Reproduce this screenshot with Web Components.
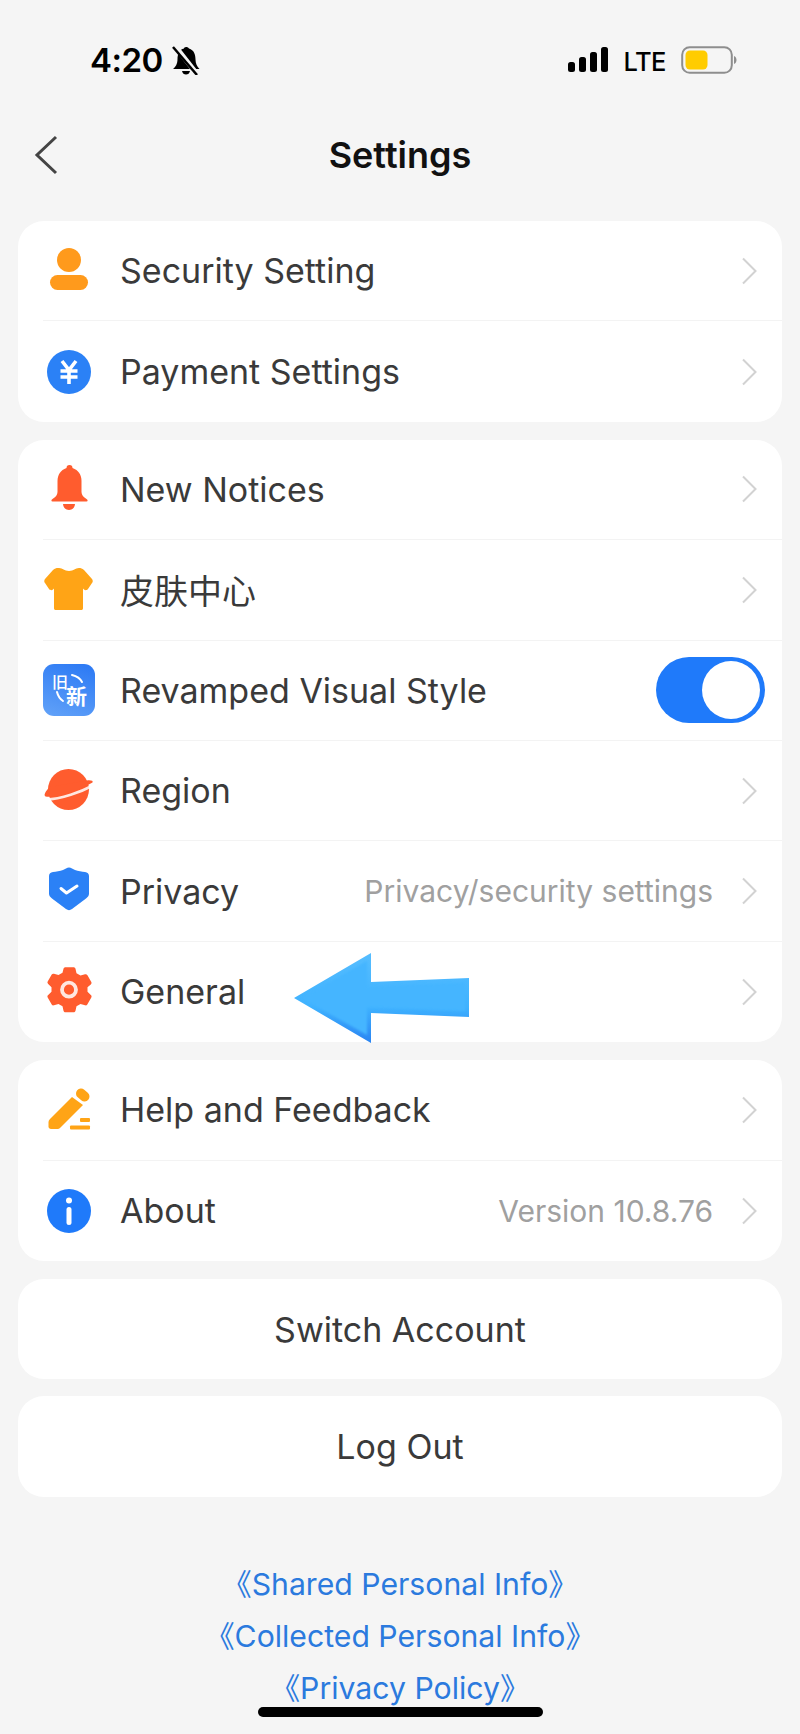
<!DOCTYPE html>
<html>
<head>
<meta charset="utf-8">
<title>Settings</title>
<style>
html, body {
    margin: 0;
    padding: 0;
    background: #f5f5f5;
}
body {
    width: 800px;
    height: 1734px;
    overflow: hidden;
    position: relative;
    font-family: Inter, "Noto Sans CJK SC", sans-serif;
}
</style>
</head>
<body>
<status-bar></status-bar>
<nav-bar>Settings</nav-bar>
<settings-card>
    <setting-row label="Security Setting"><svg slot="icon" width="52" height="52" viewBox="0 0 52 52"><circle cx="26" cy="15" r="12" fill="#ff9a1c"/><rect x="7" y="30" width="38" height="15" rx="7.5" fill="#ff9a1c"/></svg></setting-row>
    <setting-row label="Payment Settings"><svg slot="icon" width="52" height="52" viewBox="0 0 52 52"><circle cx="26" cy="26" r="22" fill="#2b81f6"/><path d="M19 15l7 9 7-9M17.5 25h17M17.5 31h17M26 24v14" fill="none" stroke="#fff" stroke-width="3.6"/></svg></setting-row>
</settings-card>
<settings-card>
    <setting-row label="New Notices"><svg slot="icon" width="52" height="52" viewBox="0 0 52 52"><path d="M23.5 5a3 3 0 0 1 6 0c6 2 9 7 9 13v11c0 3 2 5 5 7 1.5 1 1.5 2.5 0 2.5H9.5c-1.500 0-1.500-1.500 0-2.500 3-2 5-4 5-7V18c0-6 3-11 9-13z" fill="#ff5c2e"/><path d="M20 41h12c-.5 4-3 6-6 6s-5.500-2-6-6z" fill="#ff5c2e"/></svg></setting-row>
    <setting-row label="皮肤中心"><svg slot="icon" width="52" height="52" viewBox="0 0 52 52"><path d="M16 4c4 0 5 3 10 3s6-3 10-3c2 0 3 .5 5 2l8 9c1 1.500 1 3 0 4l-4 6c-1 1.500-3 1.500-4 .5l-1-1V44c0 1.500-.5 2-2 2H13c-1.500 0-2-.5-2-2V24.500l-1 1c-1 1-3 1-4-.5l-4-6c-1-1-1-2.500 0-4l8-9c2-1.500 3-2 5-2z" fill="#ffa416"/></svg></setting-row>
    <setting-row label="Revamped Visual Style" toggle><new-badge slot="icon"></new-badge></setting-row>
    <setting-row label="Region"><svg slot="icon" width="52" height="52" viewBox="0 0 52 52"><circle cx="25.500" cy="24.500" r="20.500" fill="#ff5c2e"/><path d="M6.500 22C3 26 0 30 2.500 31.500 15 33 37 25 49.500 17.500 50.500 16 48 15 44 15.500z" fill="#ff5c2e"/><path d="M3 34.500C18 34 38 27 51 20" fill="none" stroke="#fff" stroke-width="2.600" opacity=".85"/></svg></setting-row>
    <setting-row label="Privacy" value="Privacy/security settings"><svg slot="icon" width="52" height="52" viewBox="0 0 52 52"><path d="M26 2.500c2 0 4 1.500 6 2.500 3 1.200 7 1.500 10 2 2.500.5 4 1.500 4 4v17.500c0 2-1 3.500-3 5L29 44c-2 1.500-4 1.500-6 0L9 33.500c-2-1.500-3-3-3-5V11c0-2.500 1.500-3.500 4-4 3-.5 7-.8 10-2 2-1 4-2.500 6-2.500z" fill="#2b81f6"/><path d="M18 23.500l5.500 4.500L34 21" fill="none" stroke="#fff" stroke-width="3" stroke-linecap="round" stroke-linejoin="round"/></svg></setting-row>
    <setting-row label="General"><svg slot="icon" width="52" height="52" viewBox="0 0 52 52"><g transform="translate(0.500 -2.700)"><path d="M22 4h8c1 0 1.500.5 2 1.500l1 4.500 4 2.300 4.500-1.300c1-.3 1.800 0 2.300.8l4 7c.5 1 .3 1.700-.5 2.400L44 24v4.500l3.300 3.300c.8.7 1 1.400.5 2.400l-4 7c-.5.8-1.300 1.100-2.300.8L37 40.700 33 43l-1 4.500c-.5 1-1 1.500-2 1.500h-8c-1 0-1.500-.5-2-1.500L19 43l-4-2.300-4.500 1.300c-1 .3-1.800 0-2.300-.8l-4-7c-.5-1-.3-1.700.5-2.400L8 28.500V24l-3.300-3.300c-.8-.7-1-1.400-.5-2.400l4-7c.5-.8 1.300-1.100 2.300-.8L15 11.800 19 9.500l1-4C20.500 4.500 21 4 22 4z" fill="#ff5c2e"/><circle cx="25.500" cy="26.400" r="7" fill="none" stroke="#fff" stroke-width="3.800" opacity=".85"/></g></svg></setting-row>
</settings-card>
<settings-card>
    <setting-row label="Help and Feedback"><svg slot="icon" width="52" height="52" viewBox="0 0 52 52"><path d="M29 13l11 8-22.500 22.500c-1 1-2 1.500-3 1.500H8c-1.500 0-2.500-1-2.500-2.500V38c0-1 .5-2 1.500-3z" fill="#ffa416"/><path d="M38 9.500l3.500 3" fill="none" stroke="#ffa416" stroke-width="10" stroke-linecap="round"/><rect x="37" y="34" width="10" height="4" rx="1" fill="#ffa416"/><rect x="27" y="41.500" width="20" height="4" rx="1" fill="#ffa416"/></svg></setting-row>
    <setting-row label="About" value="Version 10.8.76"><svg slot="icon" width="52" height="52" viewBox="0 0 52 52"><circle cx="26" cy="26" r="22" fill="#1f7afa"/><circle cx="26" cy="15.500" r="3" fill="#fff"/><rect x="23.500" y="22" width="5" height="18" rx="2.500" fill="#fff"/></svg></setting-row>
</settings-card>
<action-card>Switch Account</action-card>
<action-card>Log Out</action-card>
<policy-links>
    <a>《Shared Personal Info》</a>
    <a>《Collected Personal Info》</a>
    <a>《Privacy Policy》</a>
</policy-links>
<pointer-arrow></pointer-arrow>
<home-indicator></home-indicator>
<script>
class StatusBar extends HTMLElement {
    constructor() {
        super();
        this.sr = this.attachShadow({ mode: "open" });
    }
    connectedCallback() {
        this.sr.innerHTML = `<style>
:host {
    display: flex;
    align-items: center;
    height: 119px;
    padding: 0 63px 0 90px;
    box-sizing: border-box;
    color: #000;
    font-family: Inter, sans-serif;
}
.time {
    font-size: 33px;
    font-weight: 600;
    letter-spacing: -0.5px;
    margin-right: 8px;
}
.spacer { flex: 1; }
.lte {
    font-size: 25.500px;
    font-weight: 500;
    margin: 3px 15px 0;
    letter-spacing: -0.5px;
}
svg { display: block; }
</style>
<span class="time">4:20</span>
<svg width="30" height="30" viewBox="0 0 30 30"><path d="M13 3a3 3 0 0 1 5 .5c5 1.500 6.500 6 6.500 11 0 4 1.500 7 4 9.500H2c2.500-2 4.500-5 4.500-10 0-5 2-9.500 6.500-10.500z" fill="#000"/><path d="M11 26h8c-.5 2.500-2 3.500-4 3.500s-3.500-1-4-3.500z" fill="#000"/><path d="M4 1l22 28" stroke="#f5f5f5" stroke-width="5"/><path d="M2 2l24 28" stroke="#000" stroke-width="2.500"/></svg>
<span class="spacer"></span>
<svg width="40" height="25" viewBox="0 0 40 25"><rect x="0" y="15" width="7" height="10" rx="2.500"/><rect x="11" y="10" width="7" height="15" rx="2.500"/><rect x="22" y="5" width="7" height="20" rx="2.500"/><rect x="33" y="0" width="7" height="25" rx="2.500"/></svg>
<span class="lte">LTE</span>
<svg width="56" height="28" viewBox="0 0 56 28"><rect x="1.200" y="1.200" width="49.600" height="25.600" rx="7.500" fill="none" stroke="#8e8e8e" stroke-width="2"/><rect x="4.500" y="4.500" width="22" height="19" rx="4.500" fill="#ffcc00"/><path d="M53 10c2 1 2.500 2.500 2.500 4s-.5 3-2.500 4z" fill="#8e8e8e"/></svg>`;
    }
}
customElements.define("status-bar", StatusBar);

class NavBar extends HTMLElement {
    constructor() {
        super();
        this.sr = this.attachShadow({ mode: "open" });
    }
    connectedCallback() {
        this.sr.innerHTML = `<style>
:host {
    display: grid;
    grid-template-columns: 1fr auto 1fr;
    align-items: center;
    height: 72px;
    margin-bottom: 30px;
    padding: 0 33px;
}
.title {
    font-size: 36px;
    font-weight: 600;
    color: #111;
}
svg { display: block; }
</style>
<svg width="26" height="40" viewBox="0 0 26 40"><path d="M23 2L4 20l19 18" fill="none" stroke="#444" stroke-width="3"/></svg>
<span class="title"><slot></slot></span>
<span></span>`;
    }
}
customElements.define("nav-bar", NavBar);

class SettingsCard extends HTMLElement {
    constructor() {
        super();
        this.sr = this.attachShadow({ mode: "open" });
    }
    connectedCallback() {
        this.sr.innerHTML = `<style>
:host {
    display: block;
    margin: 0 18px 18px;
    background: #fff;
    border-radius: 26px;
    overflow: hidden;
}
</style>
<slot></slot>`;
    }
}
customElements.define("settings-card", SettingsCard);

class SettingRow extends HTMLElement {
    constructor() {
        super();
        this.sr = this.attachShadow({ mode: "open" });
    }
    connectedCallback() {
        const label = this.getAttribute("label");
        const value = this.getAttribute("value");
        const right = this.hasAttribute("toggle")
            ? `<toggle-switch></toggle-switch>`
            : `${value ? `<span class="value">${value}</span>` : ""}<svg class="chevron" width="18" height="28" viewBox="0 0 18 28"><path d="M2 1.500L14.500 14 2 26.500" fill="none" stroke="#d2d2d2" stroke-width="2"/></svg>`;
        this.sr.innerHTML = `<style>
:host {
    display: flex;
    align-items: center;
    height: 100.400px;
    margin-left: 25px;
    padding-right: 17px;
    box-sizing: border-box;
    border-bottom: 1px solid #f3f3f3;
    font-family: Inter, "Noto Sans CJK SC", sans-serif;
}
:host(:last-child) { border-bottom: 0; }
.icon {
    width: 52px;
    height: 52px;
    margin-right: 25px;
    flex: none;
}
.label {
    flex: 1;
    font-size: 34px;
    color: #3a3a3a;
}
.value {
    font-size: 30px;
    color: #a0a0a0;
    margin-right: 28px;
}
.chevron { margin-right: 6px; }
svg { display: block; }
</style>
<span class="icon"><slot name="icon"></slot></span>
<span class="label">${label}</span>
${right}`;
    }
}
customElements.define("setting-row", SettingRow);

class ToggleSwitch extends HTMLElement {
    constructor() {
        super();
        this.sr = this.attachShadow({ mode: "open" });
    }
    connectedCallback() {
        this.sr.innerHTML = `<style>
:host {
    display: flex;
    justify-content: flex-end;
    align-items: center;
    width: 109px;
    height: 66px;
    padding-right: 5px;
    box-sizing: border-box;
    border-radius: 33px;
    background: #1f7afa;
}
.knob {
    width: 58px;
    height: 58px;
    border-radius: 50%;
    background: #fff;
}
</style>
<span class="knob"></span>`;
    }
}
customElements.define("toggle-switch", ToggleSwitch);

class NewBadge extends HTMLElement {
    constructor() {
        super();
        this.sr = this.attachShadow({ mode: "open" });
    }
    connectedCallback() {
        this.sr.innerHTML = `<style>
:host {
    display: block;
    position: relative;
    width: 52px;
    height: 52px;
    border-radius: 11px;
    background: linear-gradient(200deg, #2a78f4, #62a2f8);
    color: #fff;
    font-family: "Noto Sans CJK SC", sans-serif;
    overflow: hidden;
}
span { position: absolute; line-height: 1; }
.old { left: 9px; top: 9px; font-size: 16px; font-weight: 500; }
.new { left: 23px; top: 21px; font-size: 21px; font-weight: 700; }
svg { position: absolute; left: 0; top: 0; }
</style>
<svg width="52" height="52" viewBox="0 0 52 52"><path d="M29 11c4 1 8 3 10 7M14 28c1 4 3 7 6 9" fill="none" stroke="#fff" stroke-width="2" stroke-linecap="round"/></svg>
<span class="old">旧</span>
<span class="new">新</span>`;
    }
}
customElements.define("new-badge", NewBadge);

class ActionCard extends HTMLElement {
    constructor() {
        super();
        this.sr = this.attachShadow({ mode: "open" });
    }
    connectedCallback() {
        this.sr.innerHTML = `<style>
:host {
    display: flex;
    justify-content: center;
    align-items: center;
    height: 100.500px;
    margin: 0 18px 17px;
    background: #fff;
    border-radius: 26px;
    font-size: 34px;
    color: #3a3a3a;
    font-family: Inter, sans-serif;
}
</style>
<slot></slot>`;
    }
}
customElements.define("action-card", ActionCard);

class PolicyLinks extends HTMLElement {
    constructor() {
        super();
        this.sr = this.attachShadow({ mode: "open" });
    }
    connectedCallback() {
        this.sr.innerHTML = `<style>
:host {
    display: flex;
    flex-direction: column;
    align-items: center;
    margin-top: 61px;
    font-family: Inter, "Noto Sans CJK SC", sans-serif;
    font-size: 30.200px;
    line-height: 52px;
    color: #2b7ade;
}
::slotted(a) { display: block; }
</style>
<slot></slot>`;
    }
}
customElements.define("policy-links", PolicyLinks);

class PointerArrow extends HTMLElement {
    constructor() {
        super();
        this.sr = this.attachShadow({ mode: "open" });
    }
    connectedCallback() {
        this.sr.innerHTML = `<style>
:host {
    position: absolute;
    left: 292px;
    top: 951px;
    display: block;
}
svg { display: block; }
</style>
<svg width="180" height="94" viewBox="0 0 180 94">
<defs>
<linearGradient id="body" x1="0" y1="0" x2="0" y2="1"><stop offset="0" stop-color="#56bdff"/><stop offset=".6" stop-color="#3fb2ff"/><stop offset="1" stop-color="#2a84f2"/></linearGradient>
<filter id="soft" x="-5%" y="-5%" width="110%" height="110%"><feGaussianBlur stdDeviation="1.200"/></filter>
</defs>
<path d="M2 47L79 2v29l98-4v39l-98-4v30z" fill="url(#body)"/>
<path d="M10 47L75 10v26l98-4v28l-98-4v28z" fill="#45b5ff" filter="url(#soft)"/>
</svg>`;
    }
}
customElements.define("pointer-arrow", PointerArrow);

class HomeIndicator extends HTMLElement {
    constructor() {
        super();
        this.sr = this.attachShadow({ mode: "open" });
    }
    connectedCallback() {
        this.sr.innerHTML = `<style>
:host {
    position: absolute;
    left: 258px;
    top: 1707px;
    width: 285px;
    height: 10px;
    border-radius: 5px;
    background: #000;
}
</style>`;
    }
}
customElements.define("home-indicator", HomeIndicator);
</script>
</body>
</html>
